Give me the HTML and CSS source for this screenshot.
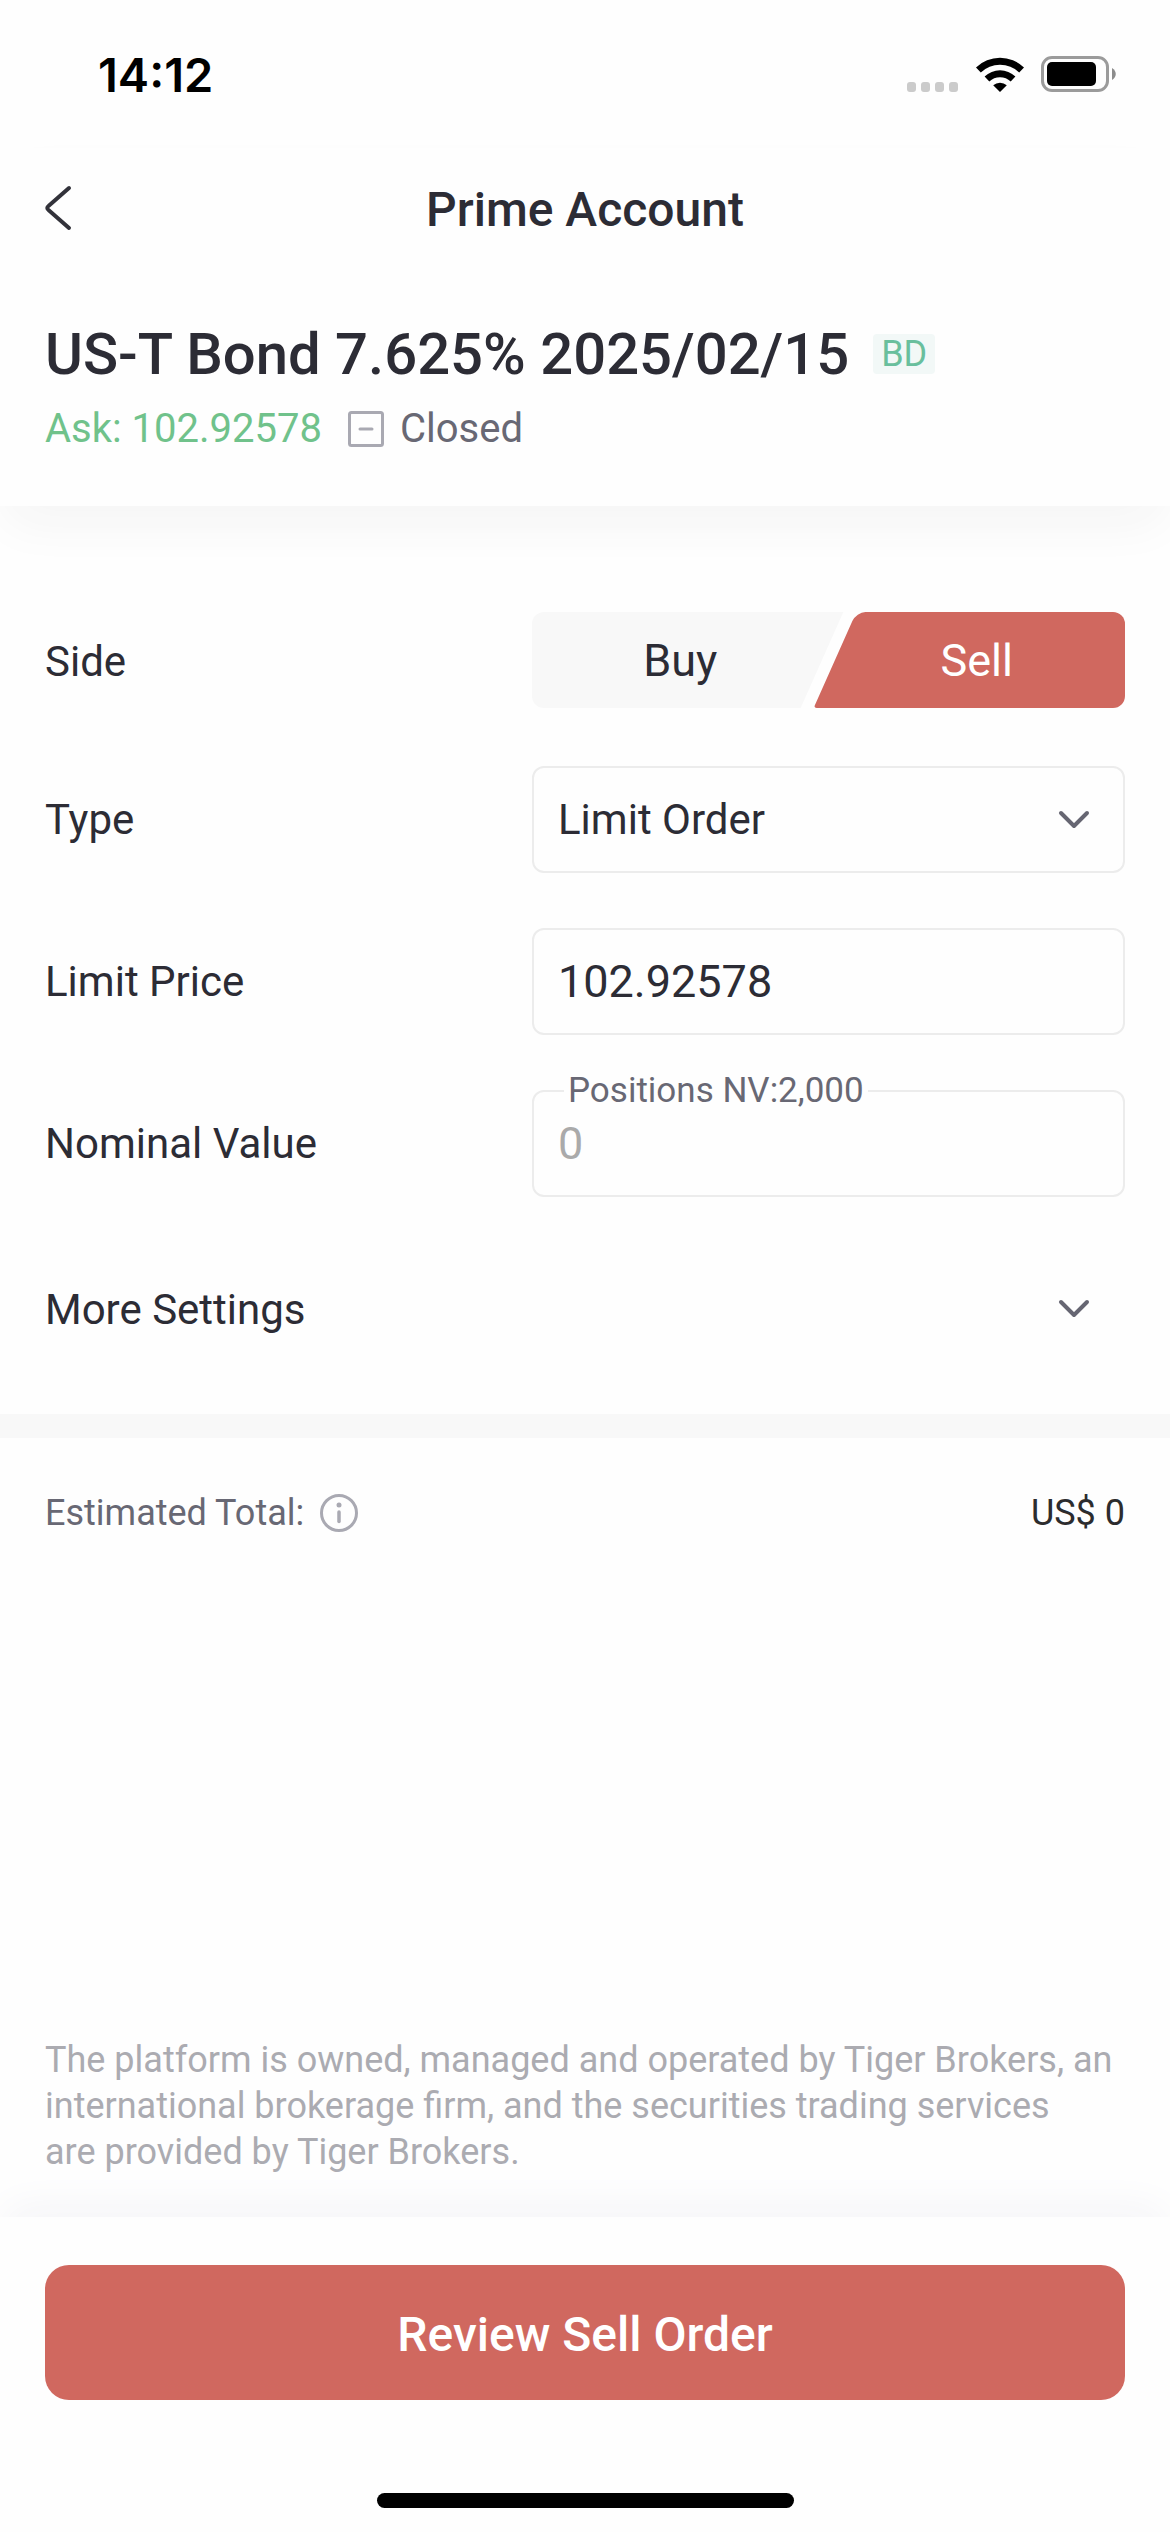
FILE: index.html
```html
<!DOCTYPE html>
<html lang="en">
<head>
<meta charset="utf-8">
<meta name="viewport" content="width=device-width, initial-scale=1">
<title>Prime Account</title>
<link rel="stylesheet" href="styles.css">
</head>
<body>
<div class="status">
  <span class="status-time">14:12</span>
  <div class="status-icons">
    <svg class="signal" width="52" height="10" viewBox="0 0 52 10" aria-hidden="true"><g fill="#cbcbcb"><rect width="9" height="10" rx="3"/><rect x="14" width="9" height="10" rx="3"/><rect x="28" width="9" height="10" rx="3"/><rect x="42" width="9" height="10" rx="3"/></g></svg>
    <svg width="50" height="36" viewBox="0 0 50 36" aria-hidden="true"><path d="M1 11.500 A34.500 34.500 0 0 1 49 11.500 L44.200 16.600 A27.500 27.500 0 0 0 5.800 16.600 Z M9.600 20.500 A22.300 22.300 0 0 1 40.400 20.500 L35.700 25.500 A15.500 15.500 0 0 0 14.300 25.500 Z M18.200 29.300 A10.200 10.200 0 0 1 31.800 29.300 L25 36 Z"/></svg>
    <svg width="75" height="36" viewBox="0 0 75 36" aria-hidden="true"><rect x="1.500" y="1.500" width="65" height="33" rx="9.500" fill="none" stroke="#9b9b9b" stroke-width="3"/><rect x="6" y="6" width="49" height="24" rx="5"/><path d="M71 12 C76 15 76 21 71 24 Z" fill="#8c8c8c"/></svg>
  </div>
</div>

<header class="header">
  <nav class="nav">
    <button class="back" type="button" aria-label="Back"><svg width="28" height="46" viewBox="0 0 28 46"><path d="M24 3 L3.500 21 Q1 23 3.500 25 L24 43" fill="none" stroke="#32323a" stroke-width="4" stroke-linecap="round"/></svg></button>
    <h1 class="nav-title">Prime Account</h1>
  </nav>
  <div class="bond">
    <h2 class="bond-name">US-T Bond 7.625% 2025/02/15</h2>
    <span class="badge">BD</span>
  </div>
  <div class="quote">
    <span class="ask">Ask: 102.92578</span>
    <svg width="36" height="36" viewBox="0 0 36 36" aria-hidden="true"><rect x="1.500" y="1.500" width="33" height="33" rx="2" fill="none" stroke="#a9a9b2" stroke-width="3"/><path d="M12 18 H24" stroke="#a9a9b2" stroke-width="3" stroke-linecap="round"/></svg>
    <span class="market">Closed</span>
  </div>
</header>

<main class="main">
  <form class="form">
    <div class="row">
      <span class="label" id="side">Side</span>
      <div class="sides" role="group" aria-labelledby="side">
        <button class="side side-buy" type="button" aria-pressed="false">Buy</button>
        <button class="side side-sell" type="button" aria-pressed="true">Sell</button>
      </div>
    </div>
    <div class="row">
      <label class="label" for="type">Type</label>
      <div class="select">
        <select class="field field-select" id="type"><option>Limit Order</option></select>
        <svg class="chevron" width="32" height="20" viewBox="0 0 32 20" aria-hidden="true"><path d="M3 3 L16 16 L29 3"/></svg>
      </div>
    </div>
    <div class="row">
      <label class="label" for="price">Limit Price</label>
      <input class="field" id="price" type="text" value="102.92578">
    </div>
    <div class="row">
      <label class="label" for="nominal">Nominal Value</label>
      <div class="noted">
        <input class="field" id="nominal" type="text" placeholder="0">
        <span class="note">Positions NV:2,000</span>
      </div>
    </div>
    <button class="more" type="button">More Settings
      <svg class="chevron" width="32" height="20" viewBox="0 0 32 20" aria-hidden="true"><path d="M3 3 L16 16 L29 3"/></svg>
    </button>
  </form>
  <div class="total">
    <span>Estimated Total:</span>
    <button class="info" type="button" aria-label="About the estimated total"><svg width="38" height="38" viewBox="0 0 38 38"><circle cx="19" cy="19" r="17.500" fill="none" stroke="#a9a9b2" stroke-width="3"/><circle cx="19" cy="11" r="2.500" fill="#a9a9b2"/><path d="M19 18 V27.500" stroke="#a9a9b2" stroke-width="3.500" stroke-linecap="round"/></svg></button>
    <span class="total-value">US$ 0</span>
  </div>
  <p class="legal">The platform is owned, managed and operated by Tiger Brokers, an international brokerage firm, and the securities trading services<br>are provided by Tiger Brokers.</p>
</main>

<footer class="footer">
  <button class="review" type="button">Review Sell Order</button>
  <div class="home"></div>
</footer>
</body>
</html>
```
FILE: styles.css
```css
* { box-sizing: border-box; }

body {
  margin: 0;
  min-height: 100vh;
  display: flex;
  flex-direction: column;
  background: #fefefe;
  color: #2c2c35;
  font-family: Roboto, "Liberation Sans", sans-serif;
  font-size: 42px;
}

svg { display: block; flex: none; }

button {
  border: 0;
  padding: 0;
  background: none;
  color: inherit;
  font: inherit;
}

.status {
  display: flex;
  justify-content: space-between;
  align-items: center;
  height: 148px;
  padding: 0 54px 0 98px;
}

.status-time {
  color: #000;
  font-family: Inter, sans-serif;
  font-size: 47px;
  font-weight: 600;
}

.status-icons { display: flex; align-items: flex-end; gap: 16px; }

.header {
  padding: 0 45px 52px;
  box-shadow: 0 24px 48px -8px #f4f4f4;
}

.nav {
  display: grid;
  grid-template-columns: 60px 1fr 60px;
  align-items: center;
  height: 120px;
}

.nav-title {
  margin: 0;
  padding-top: 3px;
  font-size: 48px;
  font-weight: 500;
  text-align: center;
}

.bond {
  display: flex;
  align-items: center;
  gap: 24px;
  margin-top: 50px;
}

.bond-name {
  margin: 0;
  font-size: 58px;
  font-weight: 500;
  line-height: 72px;
}

.badge {
  padding: 0 8px;
  border-radius: 4px;
  background: #f2f8f7;
  color: #69bf9d;
  font-size: 36px;
  line-height: 40px;
}

.quote {
  display: flex;
  align-items: center;
  gap: 16px;
  margin-top: 14px;
  font-size: 40px;
  line-height: 50px;
}

.ask { margin-right: 10px; color: #70c28b; }
.market { color: #686874; }

.main { flex: 1; display: flex; flex-direction: column; }

.form {
  display: grid;
  gap: 55px;
  padding: 106px 45px 48px;
  border-bottom: 24px solid #f8f8f8;
}

.row {
  display: grid;
  grid-template-columns: 487px 1fr;
  align-items: center;
}

.sides { display: flex; height: 96px; margin-bottom: 3px; }

.side {
  position: relative;
  isolation: isolate;
  flex: 1;
  font-size: 45px;
}

.side-buy { padding-right: 14px; }
.side-sell { margin-left: -28px; padding-left: 14px; color: #fff; }

.side::before,
.side::after {
  content: "";
  position: absolute;
  z-index: -1;
  top: 0;
  bottom: 0;
  background: #f8f8f8;
}

.side-sell::before,
.side-sell::after { background: #d0685f; }

/* One slanted half and one straight half make each tab. */
.side-buy::before { left: 0; right: 50%; border-radius: 12px 0 0 12px; }
.side-buy::after { left: 30%; right: 20px; transform: skewX(-24deg); }
.side-sell::before { left: 20px; right: 30%; border-radius: 9px 0 0 3px; transform: skewX(-24deg); }
.side-sell::after { left: 50%; right: 0; border-radius: 0 12px 12px 0; }

.field {
  display: block;
  width: 100%;
  height: 107px;
  padding: 0 24px;
  border: 2px solid #ececec;
  border-radius: 12px;
  background: transparent;
  color: #2c2c35;
  font: inherit;
  font-size: 45px;
}

.field::placeholder { color: #aaa; opacity: 1; }

.select { display: grid; align-items: center; }
.select > * { grid-area: 1 / 1; }
.field-select { appearance: none; font-size: 42px; }

.chevron {
  justify-self: end;
  margin-right: 35px;
  fill: none;
  stroke: #666672;
  stroke-width: 4;
  stroke-linecap: round;
  stroke-linejoin: round;
  pointer-events: none;
}

.noted { position: relative; }

.note {
  position: absolute;
  top: -20px;
  left: 32px;
  padding: 0 4px;
  background: #fefefe;
  color: #686874;
  font-size: 35px;
  line-height: 42px;
}

.more {
  display: flex;
  align-items: center;
  justify-content: space-between;
  height: 114px;
  text-align: left;
}

.total {
  display: flex;
  align-items: center;
  gap: 16px;
  padding: 48px 45px;
  color: #686874;
  font-size: 36px;
  line-height: 54px;
}

.total-value { margin-left: auto; color: #2c2c2e; }

.legal {
  margin: auto 0 0;
  padding: 0 45px 42px;
  color: #ababb1;
  font-size: 36px;
  line-height: 46px;
}

.footer {
  padding: 48px 45px 24px;
  background: #fefefe;
  box-shadow: 0 -16px 40px -8px #f4f4f7;
}

.review {
  display: block;
  width: 100%;
  height: 135px;
  padding-top: 4px;
  border-radius: 24px;
  background: #d0685f;
  color: #fff;
  font-size: 48px;
  font-weight: 500;
}

.home {
  width: 417px;
  height: 15px;
  margin: 93px auto 0;
  border-radius: 8px;
  background: #000;
}
```
